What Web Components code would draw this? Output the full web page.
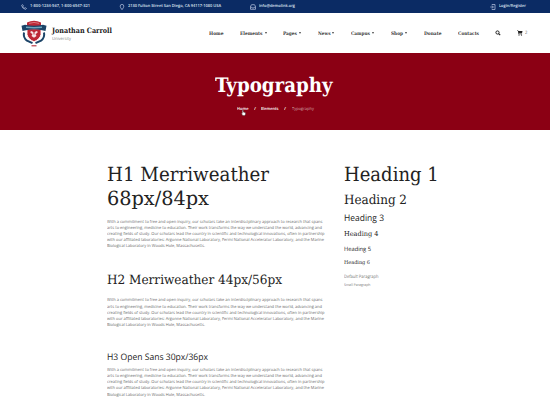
<!DOCTYPE html>
<html lang="en"><head><meta charset="utf-8"><title>Typography</title>
<style>
html,body{margin:0;background:#fff}
body{width:550px;height:420px;overflow:hidden;font-family:"Open Sans",sans-serif;color:#222}
</style></head><body>
<site-page></site-page>
<script>
const serif='"DejaVu Serif Condensed","DejaVu Serif",serif';
const make=(root,html)=>{const t=document.createElement('template');t.innerHTML=html;root.attachShadow({mode:'open'}).append(t.content.cloneNode(true));};

/* One line of text, set to a given width; attributes: w, size, lh, top, serif, weight */
class FitLine extends HTMLElement{
  connectedCallback(){
    if(this.shadowRoot)return;
    const g=n=>this.getAttribute(n);
    const fam=this.hasAttribute('serif')?'font-family:'+serif+';font-stretch:condensed;':'font-family:"Open Sans",sans-serif;';
    make(this,`<style>:host{display:block;flex:none;width:${g('w')}px;height:${g('lh')}px;margin-top:${g('top')||0}px}
      span{display:inline-block;vertical-align:top;white-space:nowrap;transform-origin:0 0;text-rendering:geometricPrecision;${fam}font-size:${g('size')}px;line-height:${g('lh')}px;font-weight:${g('weight')||400}}</style><span><slot></slot></span>`);
    const s=this.shadowRoot.querySelector('span');
    s.style.transform=`scaleX(${+g('w')/s.getBoundingClientRect().width})`;
  }
}
customElements.define('fit-line',FitLine);

class TopBar extends HTMLElement{connectedCallback(){make(this,`<style>
:host{display:flex;height:13px;background:#0b2b64;color:#dfe5f1;padding:0 24px 0 21px;box-sizing:border-box;align-items:center}
svg{width:6px;height:6px;flex:none;fill:none;stroke:#a9b8d6;stroke-width:.8}
div{display:flex;align-items:center;gap:3px}
.a{width:98px}.b{width:131px}.c{flex:1}
</style>
<div class="a"><svg viewBox="0 0 6 6"><path d="M1.5.6.6 1.3Q1 4.7 4.7 5.4L5.5 4.5 4.2 3.6 3.5 4.1Q2.3 3.4 1.9 2.5L2.4 1.8Z"/></svg><fit-line w="60" size="4.1" lh="7" weight="600">1-800-1234-567, 1-800-6547-321</fit-line></div>
<div class="b"><svg viewBox="0 0 6 6"><path d="M3 5.7Q1.2 3.5 1.2 2.2A1.8 1.8 0 0 1 4.8 2.2Q4.8 3.5 3 5.7Z"/></svg><fit-line w="93" size="4.1" lh="7" weight="600">2130 Fulton Street San Diego, CA 94117-1080 USA</fit-line></div>
<div class="c"><svg viewBox="0 0 6 6"><path d="M.5 2.5 1.5.7h3l1 1.8v2.8h-5ZM.5 2.7 3 4.2 5.5 2.7"/></svg><fit-line w="36" size="4.1" lh="7" weight="600">info@demolink.org</fit-line></div>
<div><svg viewBox="0 0 6 6"><path d="M2 1.5V.5h3v5H2v-1M.3 3h3M2.4 2l1 1-1 1"/></svg><fit-line w="27" size="4.1" lh="7" weight="600">Login/Register</fit-line></div>`)}}
customElements.define('top-bar',TopBar);

class CrestLogo extends HTMLElement{connectedCallback(){make(this,`<style>:host{display:block;width:26px;height:28px}svg{display:block}</style>
<svg width="26" height="27" viewBox="0 0 26 28" preserveAspectRatio="none">
<path d="M6 2.500Q13-1 20 2.500v4H6Z" fill="#bd2835"/><path d="M8 3.500Q13 1.500 18 3.500" stroke="#e49aa0" fill="none" stroke-width=".7"/>
<path d="M3 13Q2 18.500 6 21.500L11.500 24M23 13Q24 18.500 20 21.500L14.500 24" stroke="#1c4468" stroke-width="2" fill="none"/>
<path d="M6 9h14v6q-1 5-7 7.500-6-2.500-7-7.500Z" fill="#bd2835" stroke="#fff" stroke-width=".9"/>
<path d="M.5 6 4 5Q13 7 22 5l3.500 1-1 5.500-3.500-1Q13 8.500 5 10.500l-3.500 1Z" fill="#1c4468"/>
<path d="M5 7.500Q13 8.500 21 7.500" fill="none" stroke="#6fa4bb" stroke-width="1.500"/>
<path d="M9 12.500l1.500-1 2.500 1.500 2.500-1.500 1.500 1-1.500 1.500-1 .5 1 2-2.500 2-2.500-2 1-2-1-.5Z" fill="#f6e3e4"/><path d="M13 12v3" stroke="#bd2835"/>
<path d="M10.500 26.700h5" stroke="#c7606a" stroke-width="1.500"/></svg>`)}}
customElements.define('crest-logo',CrestLogo);

class SiteHeader extends HTMLElement{connectedCallback(){
/* label, left edge, width, has a menu arrow */
const items=[['Home',209,14.5],['Elements',240,22.5,1],['Pages',283,14,1],['News',317.5,12.5,1],['Campus',351,19,1],['Shop',391,12,1],['Donate',423.5,17.5],['Contacts',457.5,21]];
let x=209;
const nav=items.map(([n,l,w,m])=>{const gap=l-x;x=l+w+(m?4:0);return `<div class="n" style="margin-left:${gap}px"><fit-line serif w="${w}" size="4.8" lh="8" top="1.4" weight="700">${n}</fit-line>${m?'<i></i>':''}</div>`}).join('');
make(this,`<style>:host{display:flex;height:40px;background:#fff;color:#222;box-sizing:border-box;padding-left:21px}
crest-logo{margin-top:7px}.brand{width:157px;padding-left:5px;padding-top:12.5px;color:#1a1a1a}
.brand fit-line+fit-line{color:#888}
nav{display:flex;height:40px;align-items:center;color:#3a3a3a}
.n{display:flex;align-items:center}i{width:0;margin-left:2px;border:1px solid transparent;border-top:2px solid #444;border-bottom:0}
svg{display:block}</style>
<crest-logo></crest-logo><div class="brand"><fit-line serif w="60" size="7.3" lh="10" weight="700">Jonathan Carroll</fit-line><fit-line w="19" size="4.3" lh="6">University</fit-line></div>
<nav>${nav}<svg style="margin-left:16.5px" width="6" height="6" viewBox="0 0 6 6"><circle cx="2.5" cy="2.5" r="1.6" fill="none" stroke="#222" stroke-width="1"/><path d="M3.6 3.6 5.2 5.2" stroke="#222" stroke-width="1.2"/></svg>
<svg style="margin-left:15.5px" width="6" height="6" viewBox="0 0 6 6"><path d="M0 .5h1.2l.2.6H5.5L5 3.300H2l.1.5h3v.5H1.5L.9 1H0Z" fill="#222"/><circle cx="2" cy="5" r=".6"/><circle cx="4.5" cy="5" r=".6"/></svg><fit-line style="margin-left:2.5px;color:#666" w="2.4" size="4.5" lh="7">2</fit-line></nav>`)}}
customElements.define('site-header',SiteHeader);

class PageHero extends HTMLElement{connectedCallback(){make(this,`<style>
:host{display:flex;flex-direction:column;align-items:center;height:77px;background:#8b0014;color:#fff;position:relative;padding-right:2px}
.crumbs{display:flex;margin:7.5px 0 0 2px;width:77px}
.home{text-decoration:underline #c98088 .5px;text-underline-offset:1px}
svg{position:absolute;left:241px;top:57px}
</style><fit-line serif w="117.5" size="20" lh="26" top="19" weight="700">Typography</fit-line>
<div class="crumbs"><fit-line class="home" w="11.5" size="4.1" lh="7" weight="600">Home</fit-line><fit-line style="margin-left:5.5px" w="2" size="4.1" lh="7" weight="600">/</fit-line><fit-line style="margin-left:5px" w="17.5" size="4.1" lh="7" weight="600">Elements</fit-line><fit-line style="margin-left:5.5px" w="2" size="4.1" lh="7" weight="600">/</fit-line><fit-line style="margin-left:6px;color:#d0a0a7" w="22" size="4.1" lh="7">Typography</fit-line></div>
<svg width="5" height="6" viewBox="0 0 5 6"><path d="M1.3.3h1v1.8l2.2.6v1.6L3.8 5.6H1.8L.4 3.5l.9-.2Z" fill="#fff" stroke="#333" stroke-width=".4"/></svg>`)}}
customElements.define('page-hero',PageHero);

class BodyCopy extends HTMLElement{connectedCallback(){
const L=[[215.5,'With a commitment to free and open inquiry, our scholars take an interdisciplinary approach to research that spans'],[215,'arts to engineering, medicine to education. Their work transforms the way we understand the world, advancing and'],[217.5,'creating fields of study. Our scholars lead the country in scientific and technological innovations, often in partnership'],[217,'with our affiliated laboratories: Argonne National Laboratory, Fermi National Accelerator Laboratory, and the Marine'],[98,'Biological Laboratory in Woods Hole, Massachusetts.']];
make(this,`<style>:host{display:block;color:#6c6c6c}</style>`+L.map(([w,t])=>`<fit-line w="${w}" size="4.1" lh="6.17">${t}</fit-line>`).join(''))}}
customElements.define('body-copy',BodyCopy);

class SitePage extends HTMLElement{connectedCallback(){make(this,`<style>:host{display:block}
main{display:grid;grid-template-columns:237px 1fr;padding:32.6px 0 0 107px;color:#222}
.muted{color:#777}body-copy{margin-top:9px}</style>
<top-bar></top-bar><site-header></site-header><page-hero></page-hero>
<main><section>
<fit-line serif w="162" size="19.5" lh="24">H1 Merriweather</fit-line><fit-line serif w="102" size="19.5" lh="24">68px/84px</fit-line><body-copy></body-copy>
<fit-line serif w="175" size="12.8" lh="16" top="23">H2 Merriweather 44px/56px</fit-line><body-copy></body-copy>
<fit-line w="101" size="9" lh="12" top="21.5">H3 Open Sans 30px/36px</fit-line><body-copy style="margin-top:5.3px"></body-copy>
</section><aside>
<fit-line serif w="94.7" size="19.5" lh="24">Heading 1</fit-line>
<fit-line serif w="63" size="12.8" lh="16" top="6.6">Heading 2</fit-line>
<fit-line w="40" size="9" lh="12" top="3.1">Heading 3</fit-line>
<fit-line serif w="34.5" size="6.8" lh="10" top="5.2">Heading 4</fit-line>
<fit-line w="27" size="5.8" lh="8" top="5.3">Heading 5</fit-line>
<fit-line serif w="26" size="5.2" lh="8" top="6">Heading 6</fit-line>
<fit-line class="muted" w="34.5" size="4.5" lh="6" top="7.2">Default Paragraph</fit-line>
<fit-line class="muted" w="26.5" size="3.6" lh="5" top="3.5">Small Paragraph</fit-line>
</aside></main>`)}}
customElements.define('site-page',SitePage);
</script></body></html>
